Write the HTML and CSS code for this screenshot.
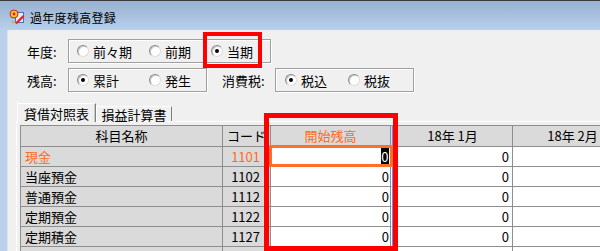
FILE: index.html
```html
<!DOCTYPE html>
<html lang="ja">
<head>
    <meta charset="UTF-8">
    <title>過年度残高登録</title>
    <link rel="stylesheet" href="styles.css">
</head>
<body>
    <div class="window">
        <div class="titlebar">
            <svg class="app-icon" width="16" height="16" viewBox="0 0 16 16">
                <rect x="6.5" y="3.5" width="8" height="10" fill="#e4ecf8" stroke="#4c70b4"/>
                <path d="M2 12 L4 15 L6 12 Z" fill="#e8b020"/>
                <circle cx="5" cy="5" r="4" fill="#f4c430" stroke="#c8281e"/>
                <circle cx="5" cy="5" r="1.4" fill="#c8281e"/>
                <path d="M7 14.5 L14.5 7" stroke="#dc2a2a" stroke-width="2.4"/>
            </svg>
            <span class="title">過年度残高登録</span>
        </div>

        <div class="client">
            <div class="row">
                <span class="label">年度:</span>
                <div class="group group-year">
                    <label class="option w72"><span class="radio"></span>前々期</label>
                    <label class="option w62"><span class="radio"></span>前期</label>
                    <label class="option"><span class="radio checked"></span>当期</label>
                </div>
            </div>
            <div class="row">
                <span class="label">残高:</span>
                <div class="group group-balance">
                    <label class="option w72"><span class="radio checked"></span>累計</label>
                    <label class="option"><span class="radio"></span>発生</label>
                </div>
                <span class="label label-tax">消費税:</span>
                <div class="group group-tax">
                    <label class="option w63"><span class="radio checked"></span>税込</label>
                    <label class="option"><span class="radio"></span>税抜</label>
                </div>
            </div>

            <div class="tabs">
                <div class="tab tab-active">貸借対照表</div>
                <div class="tab">損益計算書</div>
            </div>

            <div class="panel">
                <table class="grid">
                    <thead>
                        <tr>
                            <th class="c-name">科目名称</th>
                            <th class="c-code">コード</th>
                            <th class="c-open hl">開始残高</th>
                            <th class="c-month">18年 1月</th>
                            <th class="c-month">18年 2月</th>
                        </tr>
                    </thead>
                    <tbody>
                        <tr class="current">
                            <td class="c-name">現金</td>
                            <td class="c-code">1101</td>
                            <td class="c-open focus"><span class="caret">0</span></td>
                            <td class="c-month">0</td>
                            <td class="c-month"></td>
                        </tr>
                        <tr>
                            <td class="c-name">当座預金</td>
                            <td class="c-code">1102</td>
                            <td class="c-open">0</td>
                            <td class="c-month">0</td>
                            <td class="c-month"></td>
                        </tr>
                        <tr>
                            <td class="c-name">普通預金</td>
                            <td class="c-code">1112</td>
                            <td class="c-open">0</td>
                            <td class="c-month">0</td>
                            <td class="c-month"></td>
                        </tr>
                        <tr>
                            <td class="c-name">定期預金</td>
                            <td class="c-code">1122</td>
                            <td class="c-open">0</td>
                            <td class="c-month">0</td>
                            <td class="c-month"></td>
                        </tr>
                        <tr>
                            <td class="c-name">定期積金</td>
                            <td class="c-code">1127</td>
                            <td class="c-open">0</td>
                            <td class="c-month">0</td>
                            <td class="c-month"></td>
                        </tr>
                        <tr>
                            <td class="c-name">通知預金</td>
                            <td class="c-code">1131</td>
                            <td class="c-open">0</td>
                            <td class="c-month">0</td>
                            <td class="c-month"></td>
                        </tr>
                    </tbody>
                </table>
            </div>
        </div>

        <!-- red annotation boxes drawn over the dialog -->
        <div class="mark mark-period"></div>
        <div class="mark mark-column"></div>
    </div>
</body>
</html>
```

FILE: styles.css
```css
body {
    margin: 0;
    background-color: #f0f0f0;
    color: #000;
    font-family: "Noto Sans CJK JP", sans-serif;
    font-size: 13px;
}
.window {
    position: relative;
    width: 600px;
    height: 251px;
    overflow: hidden;
    background-color: #f0f0f0;
}

/* title bar */
.titlebar {
    height: 30px;
    box-sizing: border-box;
    border-top: 1px solid #3a3a3a;
    padding: 3px 0 0 9px;
    display: flex;
    align-items: center;
    background: linear-gradient(#97b1d1, #b8d0eb);
}
.title {
    margin-left: 5px;
    font-size: 12px;
    letter-spacing: 0.3px;
}

/* dialog body */
.client {
    height: 221px;
    box-sizing: border-box;
    border-left: 7px solid #b9d1ea;
    box-shadow: inset 1px 0 0 #e2e2e2;
    padding-top: 9px;
}
.row {
    display: flex;
    align-items: center;
    height: 24px;
    margin-left: 20px;
}
.row + .row {
    margin-top: 5px;
}
.label {
    width: 41px;
}
.label-tax {
    width: 53px;
    margin-left: 15px;
}
.group {
    height: 24px;
    box-sizing: border-box;
    border: 1px solid #a0a0a0;
    box-shadow: 1px 1px 0 #fff, inset 1px 1px 0 #fff;
    display: flex;
    align-items: center;
    padding-left: 8px;
}
.group-year { width: 203px; }
.group-balance { width: 139px; }
.group-tax { width: 139px; padding-left: 9px; }
.option {
    display: flex;
    align-items: center;
}
.w72 { width: 72px; }
.w62 { width: 62px; }
.w63 { width: 63px; }
.radio {
    position: relative;
    width: 12px;
    height: 12px;
    box-sizing: border-box;
    margin-right: 4px;
    border-radius: 50%;
    border: 1px solid #8c8c8c;
    border-right-color: #dcdcdc;
    border-bottom-color: #dcdcdc;
    background-color: #fff;
    box-shadow: inset 1px 1px 0 #c8c8c8;
}
.radio.checked::after {
    content: "";
    position: absolute;
    left: 3px;
    top: 3px;
    width: 4px;
    height: 4px;
    border-radius: 50%;
    background-color: #000;
}

/* tabs */
.tabs {
    display: flex;
    align-items: flex-end;
    height: 18px;
    margin: 11px 0 0 10px;
}
.tab {
    height: 15px;
    box-sizing: border-box;
    display: flex;
    align-items: center;
    justify-content: center;
    width: 76px;
    border: 1px solid #fff;
    border-right-color: #808080;
    border-bottom: none;
    line-height: 13px;
    padding-top: 1px;
}
.tab-active {
    position: relative;
    z-index: 1;
    width: 79px;
    height: 19px;
    margin-bottom: -1px;
    background-color: #f0f0f0;
    box-shadow: inset -1px 0 0 #c8c8c8;
    padding-bottom: 1px;
}
.panel {
    margin-left: 9px;
    border-top: 1px solid #fff;
    border-left: 1px solid #fff;
    padding: 3px 0 0 3px;
}

/* grid */
.grid {
    border-collapse: separate;
    border-spacing: 0;
    table-layout: fixed;
    width: 613px;
    border-left: 1px solid #8e8e8e;
    border-top: 1px solid #8e8e8e;
}
.grid th, .grid td {
    box-sizing: border-box;
    height: 20px;
    padding: 0;
    border-right: 1px solid #8e8e8e;
    border-bottom: 1px solid #8e8e8e;
    line-height: 19px;
    white-space: nowrap;
    overflow: hidden;
    background-color: #fff;
}
.grid th {
    height: 21px;
    font-weight: normal;
    text-align: center;
    background-color: #dadada;
    line-height: 20px;
}
.grid th.hl {
    color: #ff6a22;
}
.c-name { width: 202px; }
.c-code { width: 48px; }
.c-open { width: 122px; }
.c-month { width: 120px; }
.grid .c-open {
    border-right: 3px double #7592c6;
}
.grid td.c-name {
    background-color: #dadada;
    padding-left: 4px;
}
.grid td.c-code {
    background-color: #dadada;
    text-align: right;
    padding-right: 10px;
}
.grid td.c-open {
    text-align: right;
    padding-right: 1px;
}
.grid td.c-month {
    text-align: right;
    padding-right: 3px;
}
.current .c-name, .current .c-code {
    color: #ff6a22;
}
.grid td.focus {
    position: relative;
    overflow: visible;
}
.grid td.focus::after {
    content: "";
    position: absolute;
    left: -2px;
    top: -2px;
    right: -3px;
    bottom: -1px;
    border: 3px solid #ff6f2a;
    border-radius: 2px;
}
.caret {
    background-color: #000;
    color: #fff;
    padding: 0 0.5px;
}

/* annotation marks */
.mark {
    position: absolute;
    box-sizing: border-box;
    border: 4px solid #ff0000;
}
.mark-period {
    left: 203px;
    top: 32px;
    width: 59px;
    height: 36px;
}
.mark-column {
    left: 264px;
    top: 113px;
    width: 134px;
    height: 138px;
    border-width: 5px;
}
```
